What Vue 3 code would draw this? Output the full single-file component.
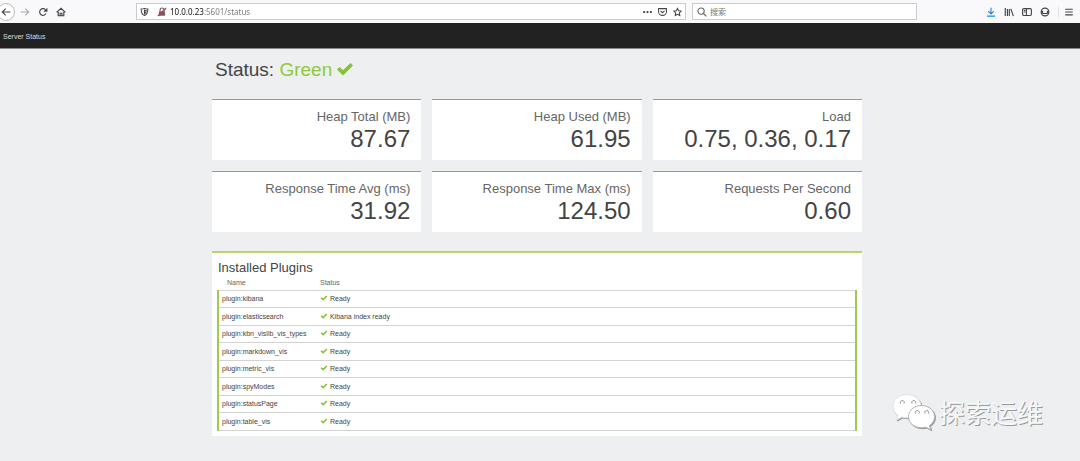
<script setup>
const metrics = [
  { label: 'Heap Total (MB)', value: '87.67' },
  { label: 'Heap Used (MB)', value: '61.95' },
  { label: 'Load', value: '0.75, 0.36, 0.17' },
  { label: 'Response Time Avg (ms)', value: '31.92' },
  { label: 'Response Time Max (ms)', value: '124.50' },
  { label: 'Requests Per Second', value: '0.60' },
]
const plugins = [
  { name: 'plugin:kibana', status: 'Ready' },
  { name: 'plugin:elasticsearch', status: 'Kibana index ready' },
  { name: 'plugin:kbn_vislib_vis_types', status: 'Ready' },
  { name: 'plugin:markdown_vis', status: 'Ready' },
  { name: 'plugin:metric_vis', status: 'Ready' },
  { name: 'plugin:spyModes', status: 'Ready' },
  { name: 'plugin:statusPage', status: 'Ready' },
  { name: 'plugin:table_vis', status: 'Ready' },
]
</script>

<template>
  <div class="page">
    <header class="toolbar">
      <nav class="nav">
        <button class="back" aria-label="Back">
          <svg viewBox="0 0 16 16"><path d="M15 8H2M7.500 2.500 2 8l5.500 5.500" /></svg>
        </button>
        <button class="dim" aria-label="Forward">
          <svg viewBox="0 0 16 16"><path d="M1 8h13M8.500 2.500 14 8l-5.500 5.500" /></svg>
        </button>
        <button aria-label="Reload">
          <svg viewBox="0 0 16 16"><path d="M12.800 10.500A5.400 5.400 0 1 1 12 4.300" /><path class="solid" d="M15 1v6.500H8.500z" /></svg>
        </button>
        <button aria-label="Home">
          <svg viewBox="0 0 16 16"><path d="M1 8.500 8 2l7 6.500M3.500 7.500V14h9V7.500M6.500 14v-4h3v4" /></svg>
        </button>
      </nav>
      <div class="field address">
        <svg viewBox="0 0 16 16"><path d="M8 1.500c2 1 4 1.300 6 1.300 0 6-2 10-6 11.700C4 12.800 2 8.800 2 2.800c2 0 4-.3 6-1.300z" /><path d="M8 4.500v7c2-1.500 3-4 3-6.500z" /></svg>
        <svg class="insecure" viewBox="0 0 16 16"><path class="solid" d="M3 7h10v7H3z" /><path d="M5 7V4.500a3 3 0 0 1 6 0V7" /><path class="slash" d="M1.500 14.500 14.500 1.500" /></svg>
        <input class="url" type="text" value="10.0.0.23:5601/status" aria-label="Address" />
        <button aria-label="Page actions">
          <svg viewBox="0 0 16 16"><g class="solid"><circle cx="2" cy="8" r="2" /><circle cx="8" cy="8" r="2" /><circle cx="14" cy="8" r="2" /></g></svg>
        </button>
        <button aria-label="Save to Pocket">
          <svg viewBox="0 0 16 16"><path d="M1 2h14v5.500a7 6.500 0 0 1-14 0zM4.500 6 8 9.300 11.500 6" /></svg>
        </button>
        <button aria-label="Bookmark">
          <svg viewBox="0 0 16 16"><path d="m8 1.500 2 4.300 4.700.6-3.500 3.200.9 4.700L8 12l-4.100 2.300.9-4.700L1.300 6.400 6 5.800z" /></svg>
        </button>
      </div>
      <div class="field search">
        <svg viewBox="0 0 16 16"><circle cx="6.500" cy="6.500" r="5" /><path d="m10 10 5 5" /></svg>
        <input type="search" placeholder="搜索" aria-label="搜索" />
      </div>
      <div class="tools">
        <button class="download" aria-label="Downloads">
          <svg viewBox="0 0 16 16"><path d="M8 1v10M3.500 6.500 8 11l4.500-4.500M1.500 14.500h13" /></svg>
        </button>
        <button aria-label="Library">
          <svg viewBox="0 0 16 16"><path d="M2 1.500v13M5.500 3v11.500M8.500 3v11.500M11 3l4 11.500" /></svg>
        </button>
        <button aria-label="Sidebars">
          <svg viewBox="0 0 16 16"><rect x="1" y="2.500" width="14" height="11" rx="2" /><path d="M7 2.500v11M3 5.500h2.500M3 8h2.500" /></svg>
        </button>
        <button aria-label="Account">
          <svg viewBox="0 0 16 16"><circle cx="8" cy="8" r="6.200" /><path class="solid" d="M2 6h3v3.500h6V6h3v4l-3 1H5l-3-1z" /></svg>
        </button>
        <button class="menu" aria-label="Menu">
          <svg viewBox="0 0 16 16"><path d="M2 3.500h12M2 8h12M2 12.500h12" /></svg>
        </button>
      </div>
    </header>

    <div class="titlebar">Server Status</div>

    <main class="content">
      <h1>
        Status: <span class="green">Green</span>
        <svg class="check" viewBox="0 0 18 14"><path d="M1 7.500 3.500 5l3.500 3.300L14.500 1 17 3.500 7 13.500z" /></svg>
      </h1>

      <section class="metrics">
        <article v-for="m in metrics" :key="m.label" class="card">
          <h2>{{ m.label }}</h2>
          <p>{{ m.value }}</p>
        </article>
      </section>

      <section class="plugins">
        <h2>Installed Plugins</h2>
        <table>
          <thead>
            <tr><th class="name" scope="col">Name</th><th scope="col">Status</th></tr>
          </thead>
          <tbody>
            <tr v-for="p in plugins" :key="p.name">
              <td>{{ p.name }}</td>
              <td>
                <svg class="check" viewBox="0 0 18 14"><path d="M1 7.500 3.500 5l3.500 3.300L14.500 1 17 3.500 7 13.500z" /></svg>
                {{ p.status }}
              </td>
            </tr>
          </tbody>
        </table>
      </section>
    </main>

    <aside class="watermark">
      <svg viewBox="0 0 44 38">
        <g class="bubble">
          <path d="M15 1.500C7 1.500 1 6.500 1 13.500c0 4 2 7 5 9L4.500 27l5.500-3c1.500.5 3 .8 5 .8 8 0 14-4.800 14-11.300S23 1.500 15 1.500z" />
          <path class="front" d="M29.500 12.500c-7.500 0-13 5-13 11.200s5.500 11 13 11c1.500 0 3-.2 4.300-.6l5 2.700-1.300-4.200c3-2 5-5.200 5-8.900 0-6.200-5.500-11.200-13-11.200z" />
        </g>
        <g class="eyes"><path d="M8.500 10.500a2 2 0 1 1 3.500 0M20 10.500a2 2 0 1 1 3.500 0M23.500 20.500a2 2 0 1 1 3.500 0M33 20.500a2 2 0 1 1 3.500 0" /></g>
      </svg>
      <span>探索运维</span>
    </aside>
  </div>
</template>

<style>
body {
  margin: 0;
  background: #edeff1;
}
</style>

<style scoped>
.page {
  position: relative;
  min-height: 100vh;
  background: #edeff1;
  color: #444;
  font-family: "Liberation Sans", Arial, "Noto Sans CJK SC", sans-serif;
}
h1, h2, p {
  margin: 0;
  font-weight: 400;
}
button {
  display: flex;
  padding: 0;
  border: 0;
  background: none;
  color: inherit;
}
.toolbar {
  display: flex;
  align-items: center;
  height: 23px;
  background: #f9f9fb;
  color: #444;
}
.toolbar svg {
  width: 10px;
  height: 10px;
  flex: none;
  fill: none;
  stroke: currentColor;
  stroke-width: 1.800;
}
.toolbar .solid {
  fill: currentColor;
  stroke: none;
}
.nav {
  display: flex;
  align-items: center;
  gap: 8px;
  width: 136px;
  flex: none;
}
.nav .back {
  box-sizing: border-box;
  width: 18px;
  height: 18px;
  margin-left: -3px;
  margin-right: -3px;
  align-items: center;
  justify-content: center;
  border: 1px solid #bbb;
  border-radius: 50%;
  background: #fff;
}
.nav .dim {
  color: #aaa;
}
.field {
  box-sizing: border-box;
  display: flex;
  align-items: center;
  height: 17px;
  border: 1px solid #ccc;
  background: #fff;
}
.address {
  flex: 542;
  gap: 6px;
  padding: 0 3px;
}
.address svg:first-child {
  width: 9px;
}
.address .insecure {
  margin-left: 2px;
  color: #666;
}
.toolbar .insecure .slash {
  stroke: #d7264c;
  stroke-width: 2;
}
.search {
  flex: 215;
  gap: 3px;
  margin-left: 6px;
  padding: 0 4px;
  color: #666;
}
input {
  flex: 1;
  min-width: 0;
  padding: 0;
  border: 0;
  outline: 0;
  background: none;
  font: 8px "Noto Sans", "Noto Sans CJK SC", sans-serif;
}
input::placeholder {
  color: #777;
}
/* The host part of the address is darker than the port and path. */
.url {
  margin-left: -3px;
  background: linear-gradient(90deg, #111 34px, #777 34px);
  background-clip: text;
  color: transparent;
}
.tools {
  display: flex;
  align-items: center;
  justify-content: flex-end;
  gap: 8px;
  width: 163px;
  flex: none;
}
.tools .download {
  color: #1687f0;
}
.menu {
  padding: 0 6px 0 5px;
  border-left: 1px solid #e2e2e4;
}
.titlebar {
  height: 26px;
  padding-left: 3px;
  background: #222;
  border-bottom: 1px solid #888;
  box-sizing: border-box;
  color: #ddd;
  font-size: 7px;
  line-height: 27px;
}
.content {
  box-sizing: border-box;
  width: 650px;
  max-width: 100%;
  margin: 0 auto;
  position: relative;
  right: 3px;
}
h1 {
  padding: 10px 3px 18px;
  font-size: 19px;
  line-height: 22px;
}
.green {
  color: #8fc93a;
}
.check {
  fill: #84c232;
}
h1 .check {
  width: 18px;
  height: 14px;
  margin-left: 4px;
}
.metrics {
  display: grid;
  grid-template-columns: repeat(3, 1fr);
  gap: 11px;
}
.card {
  padding: 9px 11px 7px;
  border-top: 1px solid #999;
  background: #fff;
  text-align: right;
}
.card h2 {
  color: #666;
  font-size: 13px;
  line-height: 16px;
}
.card p {
  font-size: 24px;
  line-height: 28px;
}
.plugins {
  margin-top: 19px;
  padding: 7px 5px 5px;
  border-top: 2px solid #b5d56a;
  background: #fff;
}
.plugins h2 {
  padding-left: 1px;
  font-size: 13px;
  line-height: 16px;
}
table {
  width: 100%;
  border-collapse: collapse;
  table-layout: fixed;
  font-size: 7px;
  line-height: 14px;
}
th {
  padding: 0 3px;
  color: #666;
  font-weight: 400;
  text-align: left;
}
.name {
  width: 87px;
  padding-left: 9px;
}
tbody {
  border: solid #9ccc4b;
  border-width: 0 2px;
}
tbody tr {
  height: 17px;
}
tbody tr:nth-child(even) {
  height: 18px;
}
td {
  padding: 0 3px;
  border-top: 1px solid #d3d3d3;
  border-bottom: 1px solid #d3d3d3;
}
td .check {
  width: 8px;
  height: 6px;
}
.watermark {
  position: absolute;
  right: 37px;
  bottom: 30px;
  display: flex;
  align-items: center;
  gap: 3px;
  color: #f7f8f9;
  font: 400 26px/38px "Noto Sans CJK SC", sans-serif;
  text-shadow: 1px 1px 0 #999;
}
.watermark svg {
  width: 44px;
  height: 38px;
}
.bubble {
  fill: #fff;
  stroke: #dfe0e2;
  filter: drop-shadow(1px 1px 0 #999);
}
.bubble .front {
  stroke: #b5b5b5;
}
.eyes {
  fill: none;
  stroke: #888;
}
</style>
